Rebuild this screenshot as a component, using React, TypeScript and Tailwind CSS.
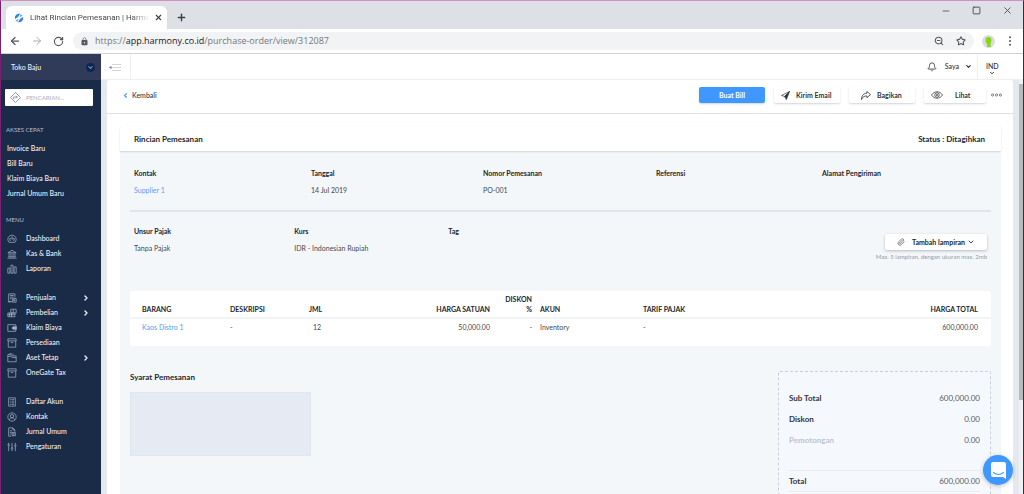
import type { ReactNode } from "react";
import {
  ArrowLeft,
  ArrowRight,
  Bell,
  ChevronDown,
  ChevronLeft,
  ChevronRight,
  Minus,
  Paperclip,
  Plus,
  RotateCw,
  Square,
  Star,
  X,
  ZoomOut,
} from "lucide-react";
import { MdLock } from "react-icons/md";

const quickLinks = ["Invoice Baru", "Bill Baru", "Klaim Biaya Baru", "Jurnal Umum Baru"];

const menuGroups = [
  [
    { label: "Dashboard", icon: "gauge" },
    { label: "Kas & Bank", icon: "bank" },
    { label: "Laporan", icon: "bars" },
  ],
  [
    { label: "Penjualan", icon: "sales", expandable: true },
    { label: "Pembelian", icon: "boxes", expandable: true },
    { label: "Klaim Biaya", icon: "wallet" },
    { label: "Persediaan", icon: "archive" },
    { label: "Aset Tetap", icon: "folder", expandable: true },
    { label: "OneGate Tax", icon: "archive" },
  ],
  [
    { label: "Daftar Akun", icon: "list" },
    { label: "Kontak", icon: "user" },
    { label: "Jurnal Umum", icon: "journal" },
    { label: "Pengaturan", icon: "sliders" },
  ],
];

const orderFields = [
  { label: "Kontak", value: "Supplier 1", link: true },
  { label: "Tanggal", value: "14 Jul 2019" },
  { label: "Nomor Pemesanan", value: "PO-001" },
  { label: "Referensi", value: "" },
  { label: "Alamat Pengiriman", value: "" },
];

const taxFields = [
  { label: "Unsur Pajak", value: "Tanpa Pajak" },
  { label: "Kurs", value: "IDR - Indonesian Rupiah" },
  { label: "Tag", value: "" },
];

const totals = [
  { label: "Sub Total", value: "600,000.00" },
  { label: "Diskon", value: "0.00" },
  { label: "Pemotongan", value: "0.00", muted: true },
];

const menuIcons: Record<string, ReactNode> = {
  gauge: (
    <>
      <path d="M5 20a10 10 0 1 1 14 0z" />
      <path d="M8 17a5 5 0 1 1 8 0M12 14l2-4M5 11l2 1M12 5v2M19 11l-2 1" />
    </>
  ),
  bank: <path d="M2 9l10-6 10 6zM5 10v9M9.500 10v9M14.500 10v9M19 10v9M3 19h18M1 22h22" />,
  bars: <path d="M2 10h5v12H2zM9.500 3h5v19h-5zM17 7h5v15h-5z" />,
  sales: (
    <>
      <path d="M19 10V2H4v19h7M7 6h9M7 10h9M7 14h4" />
      <path d="M13 13h9v9h-9zM16 16h3v3h-3zM2 21h9" />
    </>
  ),
  boxes: <path d="M9 3h13v9H9zM15 3v9M2 12h9v9H2zM11 12h8v9h-8zM6 12v9M2 16h17" />,
  wallet: (
    <>
      <path d="M21 9V4H2v16h19v-5" />
      <path d="M14 9h9v6h-9l-2-3z" fill="currentColor" />
    </>
  ),
  archive: <path d="M2 2h20v5H2zM3 7v15h18V7M9 11h6" />,
  folder: <path d="M2 21V4h7l3 3h10v14zM2 8h8l2 3h10M5 2h8l3 3" />,
  list: (
    <>
      <path d="M4 2h16v20H4z" />
      <path d="M7 6h2M11 6h6M7 10h2M11 10h6M7 14h2M11 14h6M7 18h2M11 18h6" />
    </>
  ),
  user: (
    <>
      <circle cx="12" cy="12" r="10" />
      <circle cx="12" cy="10" r="4" />
      <path d="M5 19c1-3 4-5 7-5s6 2 7 5" />
    </>
  ),
  journal: (
    <>
      <path d="M10 22H4V2h10l5 5v4M14 2v5h5M7 9h5M7 13h4M7 17h3" />
      <path d="M12 13h8v8h-8zM14 16h4M14 19h4" />
    </>
  ),
  sliders: (
    <>
      <path d="M4 2v3M4 9v13M12 2v11M12 17v5M20 2v5M20 11v11" />
      <circle cx="4" cy="7" r="2" />
      <circle cx="12" cy="15" r="2" />
      <circle cx="20" cy="9" r="2" />
    </>
  ),
};

function MenuIcon({ name }: { name: string }) {
  return (
    <svg
      viewBox="0 0 24 24"
      className="size-[10px] shrink-0 text-[#a3aec1]"
      fill="none"
      stroke="currentColor"
      strokeWidth="1.800"
    >
      {menuIcons[name]}
    </svg>
  );
}

function BrowserChrome() {
  return (
    <header className="shrink-0">
      <div className="flex h-7 items-end bg-[#dde1e6] pl-[5px]">
        <div className="flex h-[23px] w-[161px] items-center rounded-t-md bg-white pr-2 pl-2">
          <svg viewBox="0 0 20 20" className="size-[10px] shrink-0">
            <path d="M2 12A8.500 8.500 0 0 1 12 1.500L8 8z" fill="#2f7fe8" />
            <path d="M18 8A8.500 8.500 0 0 1 8 18.500L12 12z" fill="#2f7fe8" />
            <path d="M13 2l4 3-6 4zM7 18l-4-3 6-4z" fill="#58b0ff" />
          </svg>
          <span className="ml-[6px] flex-1 mask-r-from-85% font-[Roboto,sans-serif] text-[8px] whitespace-nowrap text-[#45494d]">
            Lihat Rincian Pemesanan | Harmo
          </span>
          <button aria-label="Tutup tab" className="ml-1">
            <X className="size-[9px] text-[#3c4043]" strokeWidth={3} />
          </button>
        </div>
        <button aria-label="Tab baru" className="mb-[6px] ml-[9px]">
          <Plus className="size-[11px] text-[#3c4043]" strokeWidth={3} />
        </button>
        <div className="mb-[13px] ml-auto flex items-center gap-[21px] pr-[10px] text-[#4a4d51]">
          <button aria-label="Kecilkan">
            <Minus className="size-[10px]" strokeWidth={2} />
          </button>
          <button aria-label="Perbesar">
            <Square className="size-[9px]" strokeWidth={2.5} />
          </button>
          <button aria-label="Tutup">
            <X className="size-[11px]" strokeWidth={2} />
          </button>
        </div>
      </div>
      <div className="flex h-[25px] items-center border-b border-[#cfd3d6] bg-white pr-2 pl-2 text-[#55585c]">
        <button aria-label="Kembali">
          <ArrowLeft className="size-3" strokeWidth={2.5} />
        </button>
        <button aria-label="Maju" className="ml-[10px]">
          <ArrowRight className="size-3 text-[#a9adb1]" strokeWidth={2} />
        </button>
        <button aria-label="Muat ulang" className="ml-[10px]">
          <RotateCw className="size-[11px]" strokeWidth={2.5} />
        </button>
        <div className="ml-[9px] flex h-[18px] flex-1 items-center rounded-full bg-[#f1f3f4] pr-2 pl-[7px]">
          <MdLock className="size-[9px]" />
          <span className="ml-[6px] flex-1 font-['Open_Sans',sans-serif] text-[9px] text-[#74787d]">
            https://<span className="text-[#202124]">app.harmony.co.id</span>/purchase-order/view/312087
          </span>
          <button aria-label="Zoom">
            <ZoomOut className="size-[10px]" strokeWidth={2.5} />
          </button>
          <button aria-label="Simpan bookmark" className="ml-3">
            <Star className="size-[10px]" strokeWidth={2.5} />
          </button>
        </div>
        <span className="ml-2 flex size-[13px] items-center justify-center rounded-full bg-[#dadcdf]">
          <svg viewBox="0 0 13 13" className="size-[13px]">
            <path d="M3.500 5a3 3 0 0 1 6 0c0 2-1 3-1 4.500l.5 2.500H5l.3-3C4 8.500 3.500 7 3.500 5z" fill="#84d819" />
          </svg>
        </span>
        <button aria-label="Menu browser" className="ml-[10px]">
          <svg viewBox="0 0 10 10" className="size-[10px]" fill="currentColor">
            <circle cx="5" cy="1.300" r="1" />
            <circle cx="5" cy="5" r="1" />
            <circle cx="5" cy="8.700" r="1" />
          </svg>
        </button>
      </div>
    </header>
  );
}

function Sidebar() {
  return (
    <aside className="w-[100px] shrink-0 bg-[#1a2b48] text-[7px] font-medium text-[#eef1f6]">
      <button className="flex h-[26px] w-full items-center justify-between bg-[#2f3b59] pr-[6px] pl-[10px]">
        Toko Baju
        <span className="flex size-[9px] items-center justify-center rounded-full bg-[#142445]">
          <ChevronDown className="size-[7px] text-[#3f95ff]" strokeWidth={4} />
        </span>
      </button>
      <label className="mt-[9px] mr-2 ml-1 flex h-[17px] items-center rounded-[1px] bg-white pl-[5px]">
        <svg viewBox="0 0 24 24" className="size-[11px] shrink-0 text-[#7c8697]" fill="none" stroke="currentColor" strokeWidth="1.800">
          <path d="M12 1l11 11-11 11L1 12z" />
          <path d="M8 16v-5h8M13 8l3 3-3 3" />
        </svg>
        <input
          aria-label="Pencarian"
          placeholder="PENCARIAN..."
          className="ml-[5px] w-full min-w-0 text-[6px] text-slate-700 outline-none placeholder:text-[#b0b6c1]"
        />
      </label>

      <h2 className="mt-[19px] pl-[5px] text-[6px] leading-[10px] font-normal text-[#b4bdcc]">AKSES CEPAT</h2>
      <ul className="mt-[6px] pl-[6px]">
        {quickLinks.map((label) => (
          <li key={label}>
            <a href="#" className="block leading-[15px]">{label}</a>
          </li>
        ))}
      </ul>

      <h2 className="mt-[14px] pl-[5px] text-[6px] leading-[10px] font-normal text-[#b4bdcc]">MENU</h2>
      <nav className="mt-[6px] flex flex-col gap-[14px]">
        {menuGroups.map((group, i) => (
          <ul key={i}>
            {group.map((item) => (
              <li key={item.label}>
                <a href="#" className="flex h-[15px] items-center pr-[11px] pl-[6px]">
                  <MenuIcon name={item.icon} />
                  <span className="ml-[9px] flex-1">{item.label}</span>
                  {"expandable" in item && <ChevronRight className="size-2" strokeWidth={4} />}
                </a>
              </li>
            ))}
          </ul>
        ))}
      </nav>
    </aside>
  );
}

function TopBar() {
  return (
    <div className="flex h-[26px] shrink-0 items-stretch border-b border-[#eceef0] bg-white text-[7px] font-medium text-[#30343b]">
      <button aria-label="Ciutkan menu" className="flex w-[30px] items-center border-r border-[#eff0f3] pl-2">
        <svg viewBox="0 0 12 8" className="h-2 w-3" stroke="#d3d6db" strokeWidth="1">
          <path d="M3 1.500h9M2 4.500h10M3 7.500h9" />
          <path d="M2.500 3L0 4.500 2.500 6z" fill="#5a6be0" stroke="none" />
        </svg>
      </button>
      <div className="ml-auto flex items-center pr-[5px]">
        <Bell className="size-[10px]" strokeWidth={2} />
        <button className="ml-2 flex items-center gap-[6px]">
          Saya
          <ChevronDown className="size-[7px]" strokeWidth={4} />
        </button>
      </div>
      <button className="flex w-[46px] flex-col items-start justify-center border-l border-[#eff0f3] pt-[5px] pl-2 leading-2">
        IND
        <ChevronDown className="ml-[3px] size-[6px]" strokeWidth={4} />
      </button>
    </div>
  );
}

function ActionButton({ icon, label }: { icon: ReactNode; label: string }) {
  return (
    <button className="flex h-4 items-center rounded-xs bg-white pr-[6px] pl-[7px] text-left font-bold shadow-[0_1px_2px_rgba(30,40,60,0.2)]">
      {icon}
      {label}
    </button>
  );
}

function ActionBar() {
  return (
    <div className="flex h-[34px] items-center border-b border-[#dde0e6] pr-[6px] pl-[15px] text-[7px] text-[#30343b]">
      <a href="#" className="-mt-[2px] flex items-center gap-[3px] font-medium">
        <ChevronLeft className="size-[7px] text-[#3f95ff]" strokeWidth={4} />
        Kembali
      </a>
      <div className="-mt-[3px] ml-auto grid grid-cols-[66px_66px_66px_62px_12px] items-center gap-[9px]">
        <button className="h-4 rounded-xs bg-[#3f98ff] font-bold text-white shadow-[0_1px_2px_rgba(30,40,60,0.2)]">
          Buat Bill
        </button>
        <ActionButton
          label="Kirim Email"
          icon={
            <svg viewBox="0 0 20 20" className="mr-[6px] size-[9px]" fill="none" stroke="currentColor" strokeWidth="1.500">
              <path d="M19 1L1 10l7 2z" />
              <path d="M19 1l-7 18-4-7z" fill="currentColor" />
            </svg>
          }
        />
        <ActionButton
          label="Bagikan"
          icon={
            <svg viewBox="0 0 22 20" className="mr-[6px] ml-[5px] h-[9px] w-[10px]" fill="none" stroke="currentColor" strokeWidth="1.800">
              <path d="M13 1l8 7-8 7v-4C8 11 4 12 1 19 1 10 6 5 13 5z" />
            </svg>
          }
        />
        <ActionButton
          label="Lihat"
          icon={
            <svg viewBox="0 0 24 16" className="mr-3 h-2 w-3" fill="none" stroke="currentColor" strokeWidth="1.500">
              <path d="M1 8c3-4.500 7-6.500 11-6.500S20 3.500 23 8c-3 4.500-7 6.500-11 6.500S4 12.500 1 8z" />
              <circle cx="12" cy="8" r="4.500" />
              <circle cx="12" cy="8" r="1.500" />
            </svg>
          }
        />
        <button aria-label="Lainnya" className="-ml-[4px]">
          <svg viewBox="0 0 11 4" className="h-1 w-[11px]" fill="none" stroke="#6c7076" strokeWidth="0.900">
            <circle cx="1.600" cy="2" r="1.100" />
            <circle cx="5.500" cy="2" r="1.100" />
            <circle cx="9.400" cy="2" r="1.100" />
          </svg>
        </button>
      </div>
    </div>
  );
}

function Field({ label, value, link }: { label: string; value: string; link?: boolean }) {
  return (
    <div>
      <dt className="leading-[10px] font-bold">{label}</dt>
      <dd className="mt-[7px] h-[10px] leading-[10px] text-[#44484f]">
        {link ? <a href="#" className="text-[#5a9df5]">{value}</a> : value}
      </dd>
    </div>
  );
}

function ItemsTable() {
  return (
    <div className="mx-[10px] mt-[29px] rounded-xs bg-white pb-3">
      <table className="w-full table-fixed leading-[10px]">
        <colgroup>
          <col className="w-[96px]" />
          <col className="w-[79px]" />
          <col className="w-[20px]" />
          <col className="w-[169px]" />
          <col className="w-[42px]" />
          <col className="w-[103px]" />
          <col className="w-[200px]" />
          <col className="w-[152px]" />
        </colgroup>
        <thead>
          <tr className="h-[27px] border-b-2 border-[#f2f3f5] align-bottom">
            <th className="pb-[3px] pl-3 text-left">BARANG</th>
            <th className="pb-[3px] pl-1 text-left">DESKRIPSI</th>
            <th className="pb-[3px] pl-1 text-left">JML</th>
            <th className="pr-1 pb-[3px] text-right">HARGA SATUAN</th>
            <th className="pr-1 pb-[3px] text-right">
              DISKON
              <br />%
            </th>
            <th className="pb-[3px] pl-1 text-left">AKUN</th>
            <th className="pb-[3px] pl-1 text-left">TARIF PAJAK</th>
            <th className="pr-[13px] pb-[3px] text-right">HARGA TOTAL</th>
          </tr>
        </thead>
        <tbody>
          <tr className="h-4 text-[#44484f]">
            <td className="pl-3">
              <a href="#" className="text-[#5a9df5]">Kaos Distro 1</a>
            </td>
            <td className="pl-1">-</td>
            <td className="pr-1 text-right">12</td>
            <td className="pr-1 text-right">50,000.00</td>
            <td className="pr-1 text-right">-</td>
            <td className="pl-1">Inventory</td>
            <td className="pl-1">-</td>
            <td className="pr-[13px] text-right">600,000.00</td>
          </tr>
        </tbody>
      </table>
    </div>
  );
}

function Totals() {
  return (
    <dl className="w-[213px] rounded-xs border border-dashed border-[#c9d0dc] bg-[#f5f9fe] px-[10px] pt-[15px] text-[8px] text-[#30343b]">
      {totals.map((row) => (
        <div key={row.label} className="flex h-[21px] items-center justify-between">
          <dt className={row.muted ? "font-bold text-[#bcc3d0]" : "font-bold"}>{row.label}</dt>
          <dd className="text-[#55595f]">{row.value}</dd>
        </div>
      ))}
      <div className="mt-5 flex h-[22px] items-center justify-between border-y border-[#e6ebf1]">
        <dt className="font-bold">Total</dt>
        <dd className="text-[#55595f]">600,000.00</dd>
      </div>
      <div className="h-10" />
    </dl>
  );
}

function OrderCard() {
  return (
    <section className="mt-[13px] mr-3 ml-[13px] bg-[#f4f7fa] pb-10 text-[7px] text-[#22262c]">
      <div className="flex h-6 items-center justify-between rounded-t-xs bg-white pr-4 pl-[14px] text-[8px] font-bold shadow-[0_1px_2px_rgba(30,50,90,0.18)]">
        <h1>Rincian Pemesanan</h1>
        <p>Status : Ditagihkan</p>
      </div>

      <dl className="mx-[10px] grid h-[61px] grid-cols-[177fr_172fr_173fr_166fr_173fr] border-b-2 border-[#dfe4ed] pt-[17px] *:pl-1">
        {orderFields.map((field) => (
          <Field key={field.label} {...field} />
        ))}
      </dl>

      <div className="mx-[10px] flex items-start justify-between pt-[14px] pr-1 pl-1">
        <dl className="grid w-2/3 grid-cols-[160fr_154fr_254fr]">
          {taxFields.map((field) => (
            <Field key={field.label} {...field} />
          ))}
        </dl>
        <div className="mt-2 flex flex-col items-end">
          <button className="flex h-4 w-[102px] items-center justify-center rounded-xs bg-white font-bold shadow-[0_1px_3px_rgba(30,40,60,0.3)]">
            <Paperclip className="mr-[7px] size-2 text-[#55595f]" strokeWidth={2} />
            Tambah lampiran
            <ChevronDown className="ml-[2px] size-2" strokeWidth={2.5} />
          </button>
          <p className="mt-[2px] text-[6px] leading-[10px] text-[#9499a3]">Max. 5 lampiran, dengan ukuran max. 2mb</p>
        </div>
      </div>

      <ItemsTable />

      <div className="mx-[10px] mt-[25px] flex items-start justify-between">
        <div className="w-[181px]">
          <label htmlFor="terms" className="block text-[8px] leading-3 font-bold">Syarat Pemesanan</label>
          <textarea
            id="terms"
            readOnly
            className="mt-[9px] block h-16 w-full resize-none border border-[#e1e5ec] bg-[#e6eaf2] outline-none"
          />
        </div>
        <Totals />
      </div>
    </section>
  );
}

export default function App() {
  return (
    <div className="flex h-screen flex-col overflow-hidden border-x border-t border-t-[#d08fc6] border-r-[#5c1458] border-l-[#7b1f72] font-[Lato,sans-serif]">
      <BrowserChrome />
      <div className="flex min-h-0 flex-1">
        <Sidebar />
        <div className="flex min-w-0 flex-1 flex-col">
          <TopBar />
          <div className="flex min-h-0 flex-1 bg-[#e4e9f0]">
            <main className="mr-[6px] ml-[6px] min-w-0 flex-1 overflow-hidden rounded-t-xs bg-white">
              <ActionBar />
              <OrderCard />
            </main>
            <div className="w-1 bg-[#f1f1f3] pt-1">
              <div className="h-[77%] bg-[#b9babd]" />
            </div>
          </div>
        </div>
      </div>
      <button
        aria-label="Buka obrolan"
        className="fixed right-[11px] bottom-[9px] flex size-[30px] items-center justify-center rounded-full bg-[#3f98ff] shadow-[0_1px_4px_rgba(0,0,0,0.25)]"
      >
        <svg viewBox="0 0 15 17" className="h-[17px] w-[15px]">
          <path d="M2 0h11a2 2 0 0 1 2 2v15l-3-2H2a2 2 0 0 1-2-2V2a2 2 0 0 1 2-2z" fill="#fff" />
          <path d="M2.500 10.500c3 2.400 7 2.400 10 0" fill="none" stroke="#3f98ff" strokeWidth="1.100" strokeLinecap="round" />
        </svg>
      </button>
    </div>
  );
}
